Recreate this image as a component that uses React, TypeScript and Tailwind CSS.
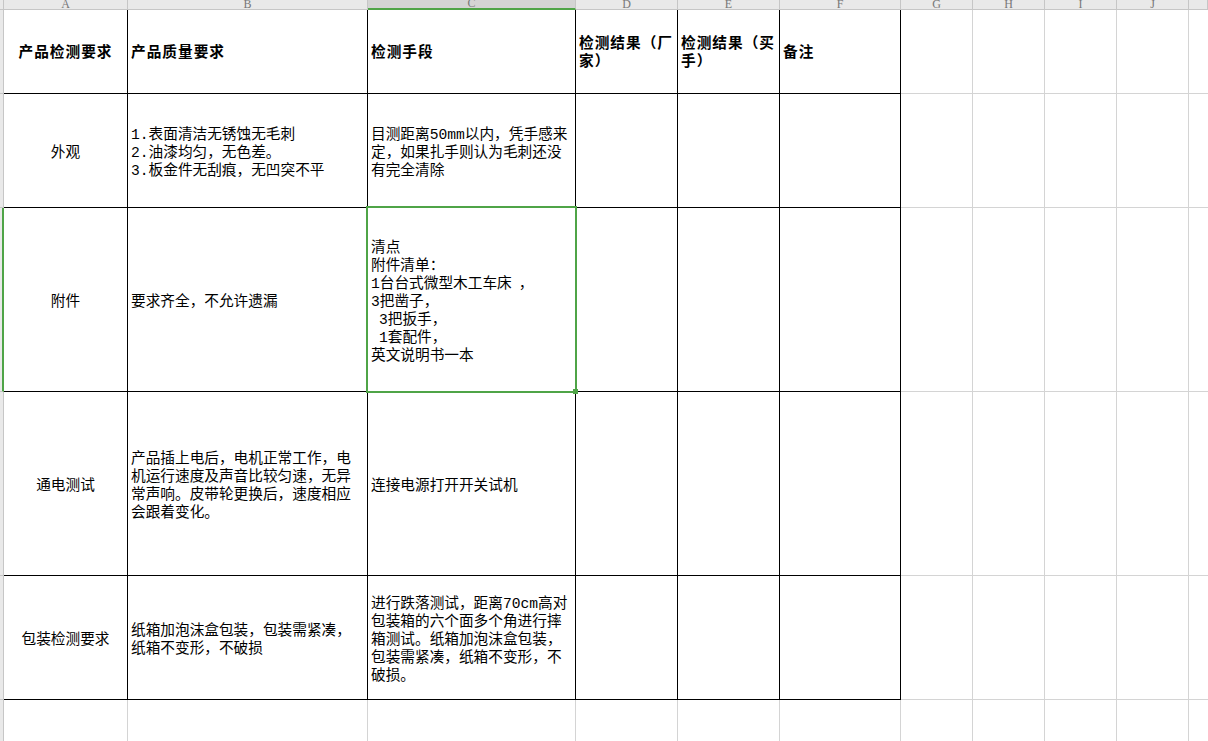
import React from 'react';

type Line = { text: string; indent?: boolean; gap?: boolean };

interface Row {
  label: string;
  quality: (string | Line)[];
  method: (string | Line)[];
  head?: boolean;
  extra?: (string | Line)[][];
}

const letters = ['A', 'B', 'C', 'D', 'E', 'F', 'G', 'H', 'I', 'J', ''];

const rows: Row[] = [
  {
    label: '产品检测要求',
    quality: ['产品质量要求'],
    method: ['检测手段'],
    head: true,
    extra: [['检测结果（厂', '家）'], ['检测结果（买', '手）'], ['备注']],
  },
  {
    label: '外观',
    quality: ['1.表面清洁无锈蚀无毛刺', '2.油漆均匀，无色差。', '3.板金件无刮痕，无凹突不平'],
    method: ['目测距离50mm以内，凭手感来', '定，如果扎手则认为毛刺还没', '有完全清除'],
  },
  {
    label: '附件',
    quality: ['要求齐全，不允许遗漏'],
    method: [
      '清点',
      '附件清单：',
      { text: '1台台式微型木工车床', gap: true },
      '3把凿子，',
      { text: '3把扳手，', indent: true },
      { text: '1套配件，', indent: true },
      '英文说明书一本',
    ],
  },
  {
    label: '通电测试',
    quality: [
      '产品插上电后，电机正常工作，电',
      '机运行速度及声音比较匀速，无异',
      '常声响。皮带轮更换后，速度相应',
      '会跟着变化。',
    ],
    method: ['连接电源打开开关试机'],
  },
  {
    label: '包装检测要求',
    quality: ['纸箱加泡沫盒包装，包装需紧凑，', '纸箱不变形，不破损'],
    method: [
      '进行跌落测试，距离70cm高对',
      '包装箱的六个面多个角进行摔',
      '箱测试。纸箱加泡沫盒包装，',
      '包装需紧凑，纸箱不变形，不',
      '破损。',
    ],
  },
];

function Lines({ lines, bold }: { lines: (string | Line)[]; bold?: boolean }) {
  return (
    <div className={bold ? 'font-bold tracking-[1px] translate-y-[1px]' : 'translate-y-[2px]'}>
      {lines.map((l, i) => {
        const line = typeof l === 'string' ? { text: l } : l;
        return (
          <div key={i} className={line.indent ? 'whitespace-nowrap pl-[8px]' : 'whitespace-nowrap'}>
            {line.text}
            {line.gap && <span className="ml-[7px]">，</span>}
          </div>
        );
      })}
    </div>
  );
}

const black = 'border-r border-b border-black';
const gray = 'border-r border-b border-[#d4d4d4]';

export default function App() {
  return (
    <div className="relative w-[1208px] h-[741px] overflow-hidden bg-white text-black text-[14.67px] leading-[18px] [font-family:'Liberation_Mono','Noto_Sans_CJK_SC',monospace]">
      <div className="grid grid-cols-[4px_124px_240px_208px_102px_102px_121px_72px_72px_72px_72px_1fr] grid-rows-[10px_84px_114px_184px_184px_124px_1fr] h-full">
        {/* column letters */}
        <div className="bg-[#e9e9e9] border-r border-b border-[#c6c6c6]" />
        {letters.map((c, i) => (
          <div
            key={c + i}
            className={
              i === 2
                ? 'flex items-end justify-center overflow-hidden bg-[#d4d4d4] border-r border-[#c6c6c6] border-b-2 border-b-[#4fa447]'
                : 'flex items-end justify-center overflow-hidden bg-[#e9e9e9] border-r border-b border-[#c6c6c6]'
            }
          >
            <span className="text-[12px] leading-[12px] text-[#777] [font-family:'Liberation_Serif',serif] translate-y-[1px]">
              {c}
            </span>
          </div>
        ))}

        {rows.map((r, ri) => (
          <React.Fragment key={ri}>
            <div
              className={
                ri === 2
                  ? 'bg-[#e9e9e9] border-r-2 border-r-[#4fa447] border-b border-b-[#c6c6c6]'
                  : 'bg-[#e9e9e9] border-r border-b border-[#c6c6c6]'
              }
            />
            <div className={`${black} flex items-center justify-center text-center`}>
              <Lines lines={[r.label]} bold={r.head} />
            </div>
            <div className={`${black} flex items-center pl-[3px]`}>
              <Lines lines={r.quality} bold={r.head} />
            </div>
            <div className={`${black} flex items-center pl-[3px]`}>
              <Lines lines={r.method} bold={r.head} />
            </div>
            {[0, 1, 2].map((k) => (
              <div key={k} className={`${black} flex items-center pl-[3px]`}>
                {r.extra && <Lines lines={r.extra[k]} bold />}
              </div>
            ))}
            {[0, 1, 2, 3].map((k) => (
              <div key={k} className={gray} />
            ))}
            <div className="border-b border-[#d4d4d4]" />
          </React.Fragment>
        ))}

        {/* empty last row */}
        <div className="bg-[#e9e9e9] border-r border-[#c6c6c6]" />
        {letters.map((c, i) => (
          <div key={'e' + i} className={i === 10 ? '' : 'border-r border-[#d4d4d4]'} />
        ))}
      </div>

      {/* active cell C3 */}
      <div className="absolute left-[366px] top-[206px] w-[211px] h-[187px] border-2 border-[#4fa447]" />
      <div className="absolute left-[573px] top-[389px] w-[5px] h-[5px] bg-[#4fa447]" />
    </div>
  );
}
